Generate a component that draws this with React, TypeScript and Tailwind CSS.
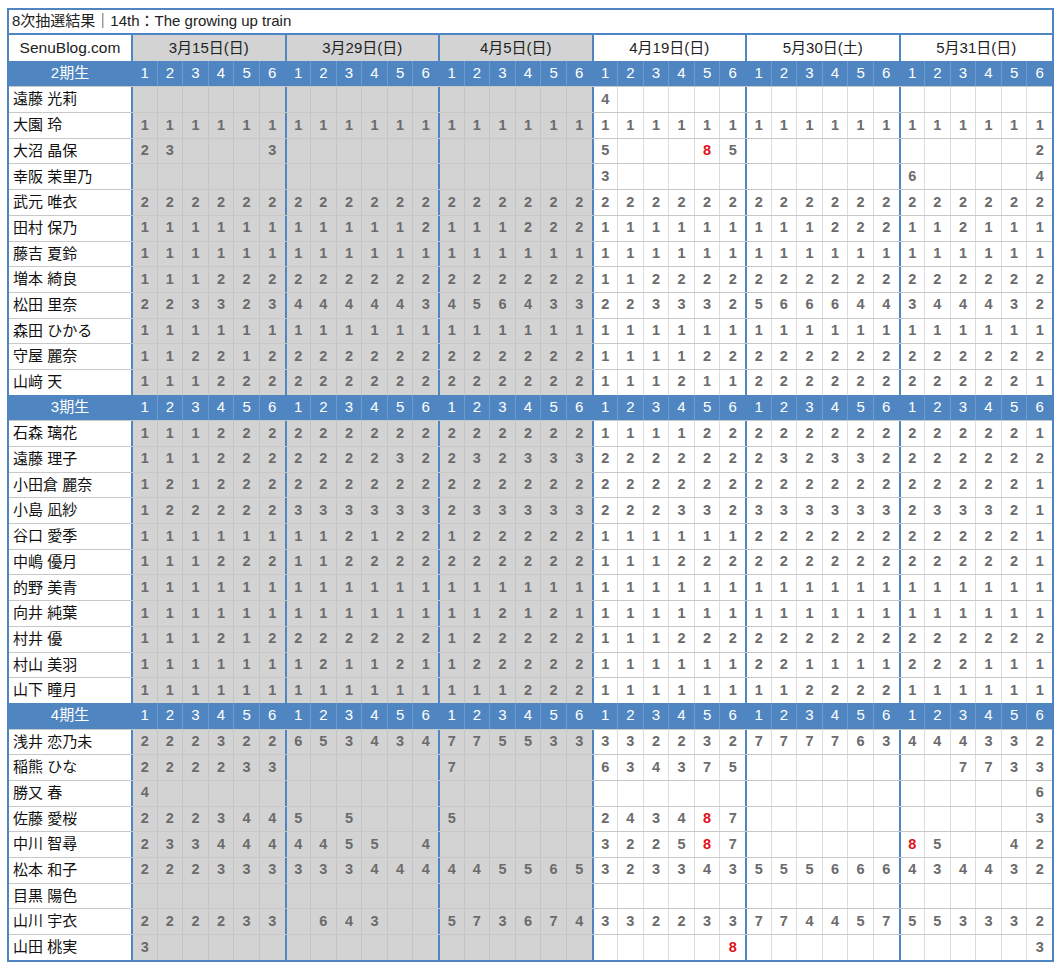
import React from "react";

const dates = ["3月15日(日)", "3月29日(日)", "4月5日(日)", "4月19日(日)", "5月30日(土)", "5月31日(日)"];

const A1 = "1".repeat(36);
const A2 = "2".repeat(36);
const E = ".".repeat(36);

type Row = [string, string];
const groups: { label: string; rows: Row[] }[] = [
  {
    label: "2期生",
    rows: [
      ["遠藤 光莉", "..................4................."],
      ["大園 玲", A1],
      ["大沼 晶保", "23...3............5...85...........2"],
      ["幸阪 茉里乃", "..................3...........6....4"],
      ["武元 唯衣", A2],
      ["田村 保乃", "111111111112111222111111111222112111"],
      ["藤吉 夏鈴", A1],
      ["増本 綺良", "111222222222222222112222222222222222"],
      ["松田 里奈", "223323444443456433223332566644344432"],
      ["森田 ひかる", A1],
      ["守屋 麗奈", "112212222222222222111122222222222222"],
      ["山﨑 天", "111222222222222222111211222222222221"],
    ],
  },
  {
    label: "3期生",
    rows: [
      ["石森 璃花", "111222222222222222111122222222222221"],
      ["遠藤 理子", "111222222232232333222222232332222222"],
      ["小田倉 麗奈", "121222222222222222222222222222222221"],
      ["小島 凪紗", "122222333333233333222332333333233321"],
      ["谷口 愛季", "111111112122122222111111222222222221"],
      ["中嶋 優月", "111222112222222222111222222222222221"],
      ["的野 美青", A1],
      ["向井 純葉", "111111111111112121111111111111111111"],
      ["村井 優", "111212222222122222111222222222222222"],
      ["村山 美羽", "111111121121122222111111221111222111"],
      ["山下 瞳月", "111111111111111222111111112222111111"],
    ],
  },
  {
    label: "4期生",
    rows: [
      ["浅井 恋乃未", "222322653434775533332232777763444332"],
      ["稲熊 ひな", "222233......7.....634375........7733"],
      ["勝又 春", "4..................................6"],
      ["佐藤 愛桜", "2223445.5...5.....243487...........3"],
      ["中川 智尋", "2334444455.4......322587......85..42"],
      ["松本 和子", "222333333444445565323343555666434432"],
      ["目黒 陽色", E],
      ["山川 宇衣", "222233.643..573674332233774457553332"],
      ["山田 桃実", "3......................8...........3"],
    ],
  },
];

const font = { fontFamily: '"Liberation Sans", Arial, "Noto Sans CJK JP", sans-serif' };
const gridCls = "grid grid-cols-[122px_repeat(36,minmax(0,1fr))] h-[25.7px]";

function sep(i: number) {
  return i % 6 === 0 ? "border-l-2 border-l-[#4f86c1]" : "border-l border-l-[#c4c4c4]";
}

export default function App() {
  return (
    <div className="bg-white w-[1060px] h-[967px] pt-[8px] pl-[7px]" style={font}>
      <div className="w-[1047px] border-2 border-[#4f86c1]">
        <div className="h-[25px] flex items-center pl-[3px] text-[15px] text-[#222] border-b-2 border-[#4f86c1]">
          8次抽選結果｜14th：The growing up train
        </div>
        <div className="grid grid-cols-[122px_repeat(6,minmax(0,1fr))] h-[25.7px]">
          <div className="flex items-center justify-center text-[15.5px] text-[#222]">SenuBlog.com</div>
          {dates.map((d, i) => (
            <div
              key={d}
              className={`flex items-center justify-center text-[15px] text-[#222] border-l-2 border-l-[#4f86c1] ${i < 3 ? "bg-[#d3d3d3]" : "bg-white"}`}
            >
              {d}
            </div>
          ))}
        </div>
        {groups.map((g) => (
          <div key={g.label}>
            <div className={`${gridCls} bg-[#4f86c1] text-white text-[15px]`}>
              <div className="flex items-center justify-center">{g.label}</div>
              {Array.from({ length: 36 }).map((_, i) => (
                <div
                  key={i}
                  className={`flex items-center justify-center ${i % 6 === 0 ? "border-l-2 border-l-[#4f86c1]" : "border-l border-l-[#6e9bd0]"}`}
                >
                  {(i % 6) + 1}
                </div>
              ))}
            </div>
            {g.rows.map(([name, vals]) => (
              <div key={name} className={`${gridCls} border-t border-t-[#c8c8c8]`}>
                <div className="flex items-center pl-[4px] text-[15px] text-[#111] bg-white">{name}</div>
                {vals.split("").map((c, i) => (
                  <div
                    key={i}
                    className={`flex items-center justify-center text-[14.5px] font-bold ${sep(i)} ${i < 18 ? "bg-[#d3d3d3]" : "bg-white border-l-[#dcdcdc]"} ${i % 6 === 0 ? "!border-l-[#4f86c1]" : ""} ${c === "8" ? "text-[#e0101a]" : "text-[#6b6b6b]"}`}
                  >
                    {c === "." ? "" : c}
                  </div>
                ))}
              </div>
            ))}
          </div>
        ))}
      </div>
    </div>
  );
}
